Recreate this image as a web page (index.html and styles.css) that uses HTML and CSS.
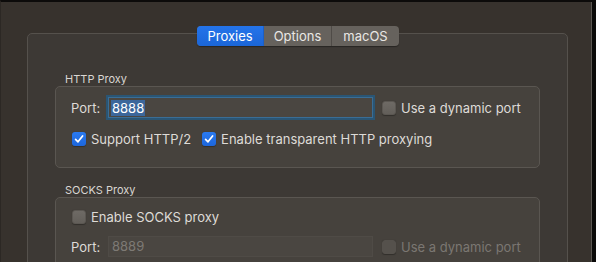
FILE: index.html
```html
<!DOCTYPE html>
<html>
<head>
<meta charset="utf-8">
<link rel="stylesheet" href="styles.css">
</head>
<body>
<div class="window">
  <div class="tabbox">
    <div class="segmented">
      <div class="seg seg-on">Proxies</div>
      <div class="seg">Options</div>
      <div class="seg seg-last">macOS</div>
    </div>

    <div class="group-title">HTTP Proxy</div>
    <div class="group-box group-http">
      <div class="row">
        <span class="field-label">Port:</span>
        <div class="field field-focus"><span class="sel">8888</span></div>
        <span class="check"></span>
        <span class="check-label">Use a dynamic port</span>
      </div>
      <div class="row row-checks">
        <span class="check check-on"><svg viewBox="0 0 14 14" width="14" height="14"><path d="M3.6 7.3 L6 9.8 L10.6 3.9" fill="none" stroke="#fff" stroke-width="1.7" stroke-linecap="round" stroke-linejoin="round"/></svg></span>
        <span class="check-label">Support HTTP/2</span>
        <span class="check check-on check-second"><svg viewBox="0 0 14 14" width="14" height="14"><path d="M3.6 7.3 L6 9.8 L10.6 3.9" fill="none" stroke="#fff" stroke-width="1.7" stroke-linecap="round" stroke-linejoin="round"/></svg></span>
        <span class="check-label">Enable transparent HTTP proxying</span>
      </div>
    </div>

    <div class="group-title title-socks">SOCKS Proxy</div>
    <div class="group-box group-socks">
      <div class="row row-checks">
        <span class="check"></span>
        <span class="check-label">Enable SOCKS proxy</span>
      </div>
      <div class="row row-port2">
        <span class="field-label">Port:</span>
        <div class="field field-disabled">8889</div>
        <span class="check check-disabled"></span>
        <span class="check-label label-disabled">Use a dynamic port</span>
      </div>
    </div>
  </div>
</div>
</body>
</html>
```

FILE: styles.css
```css
html, body {
  margin: 0;
  padding: 0;
  background: #36312c;
}

body {
  font-family: "Inter", "Roboto", sans-serif;
  font-size: 13px;
  color: #dedbd7;
}

.window {
  box-sizing: border-box;
  width: 596px;
  height: 262px;
  overflow: hidden;
  background: #37322d;
  border-top: 2px solid #0c0b0a;
  border-left: 1px solid #2c2824;
  border-right: 4px solid #0b0a09;
  box-shadow: inset -1px 0 0 #5a5651;
  padding: 31px 0 0 26px;
}

.tabbox {
  position: relative;
  box-sizing: border-box;
  width: 541px;
  height: 260px;
  background: #3d3935;
  border: 1px solid #55514c;
  border-radius: 5px;
  padding: 38px 27px 0 27px;
}

.segmented {
  position: absolute;
  top: -8px;
  left: 169px;
  display: flex;
  height: 20px;
  border-radius: 4px;
  overflow: hidden;
  background: #66625d;
  box-shadow: 0 1px 1px rgba(0, 0, 0, 0.35);
}

.seg {
  box-sizing: border-box;
  height: 20px;
  line-height: 20px;
  text-align: center;
  color: #e9e7e4;
  font-size: 13px;
  border-right: 1px solid #4f4b47;
}
.seg:nth-child(1) { width: 67px; }
.seg:nth-child(2) { width: 68px; }
.seg:nth-child(3) { width: 67px; }
.seg-last { border-right: none; }
.seg-on {
  background: linear-gradient(#2474ea, #1b66d8);
  color: #ffffff;
  border-right-color: #1b5fc6;
}

.group-title {
  font-size: 11px;
  line-height: 14px;
  color: #d9d6d2;
  padding-left: 10px;
}
.title-socks {
  margin-top: 15px;
}

.group-box {
  box-sizing: border-box;
  width: 485px;
  background: #46423d;
  border: 1px solid #5a5651;
  border-radius: 5px;
  padding-left: 15px;
}
.group-http {
  padding-top: 10px;
  padding-bottom: 20px;
}
.group-socks {
  padding-top: 11px;
  height: 120px;
}

.row {
  display: flex;
  align-items: center;
}
.row-checks {
  height: 16px;
  line-height: 16px;
  margin-top: 0;
}
.group-http .row-checks {
  margin-top: 13px;
}
.row-port2 {
  margin-top: 11px;
}

.field-label {
  width: 37px;
  flex: none;
}

.field {
  box-sizing: border-box;
  width: 265px;
  height: 21px;
  line-height: 19px;
  padding-left: 2px;
  background: #4a4641;
  border: 1px solid #55514c;
  margin-right: 9px;
  flex: none;
}
.field-focus {
  border-color: #3a6d95;
  box-shadow: 0 0 0 2px #2a5574;
}
.sel {
  display: inline-block;
  line-height: 16px;
  padding: 0 1px;
  background: #3c679b;
  color: #ffffff;
  vertical-align: middle;
}
.field-disabled {
  color: #7e7a75;
  background: #4a4641;
  border-color: #4f4b46;
  padding-left: 3px;
}

.check {
  box-sizing: border-box;
  width: 14px;
  height: 14px;
  flex: none;
  border-radius: 3px;
  background: linear-gradient(#6e6a65, #635f5a);
  border: 1px solid #5b5752;
  box-shadow: 0 0.5px 1px rgba(0, 0, 0, 0.3);
  display: flex;
  align-items: center;
  justify-content: center;
}
.check svg {
  display: block;
}
.row-checks .check:first-child {
  margin-left: 1px;
}
.check-on {
  background: linear-gradient(#2a7af0, #1c66dc);
  border: none;
}
.check-second {
  margin-left: 11px;
}
.check-disabled {
  background: #55514c;
  border-color: #55514c;
}

.check-label {
  margin-left: 5px;
  white-space: nowrap;
}
.label-disabled {
  color: #7b7772;
}
```
